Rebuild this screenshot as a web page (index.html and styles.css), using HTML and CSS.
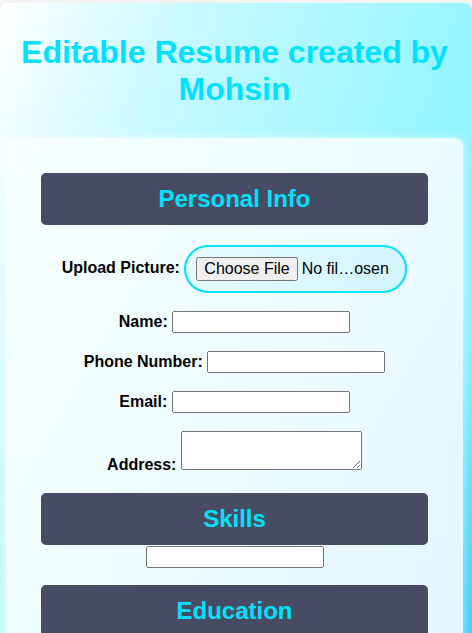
FILE: index.html
```html
<!DOCTYPE html>
<html lang="en">
<head>
<meta charset="utf-8">
<title>Editable Resume</title>
<link rel="stylesheet" href="styles.css">
</head>
<body>
<div class="page">
  <h1 class="title">Editable Resume created by Mohsin</h1>
  <form class="card">
    <h2 class="section-head">Personal Info</h2>
    <div class="row row-upload">
      <label class="label" for="pic">Upload Picture:</label>
      <span class="pill"><input class="file" type="file" id="pic"></span>
    </div>
    <div class="row">
      <label class="label" for="name">Name:</label>
      <input class="field" type="text" id="name">
    </div>
    <div class="row">
      <label class="label" for="phone">Phone Number:</label>
      <input class="field" type="text" id="phone">
    </div>
    <div class="row">
      <label class="label" for="email">Email:</label>
      <input class="field" type="text" id="email">
    </div>
    <div class="row row-address">
      <label class="label" for="address">Address:</label>
      <textarea class="area" id="address"></textarea>
    </div>
    <h2 class="section-head section-gap">Skills</h2>
    <div class="row row-tight">
      <input class="field" type="text">
    </div>
    <h2 class="section-head section-gap2">Education</h2>
    <div class="row">
      <input class="field" type="text">
    </div>
  </form>
</div>
</body>
</html>
```

FILE: styles.css
```css
html {
  background: #f3f3f3;
}
body {
  margin: 3px 0 0;
  min-height: 900px;
  border-radius: 8px 8px 0 0;
  font-family: "Liberation Sans", Arial, sans-serif;
  background:
    radial-gradient(ellipse 200px 380px at 100% 80%, rgba(40, 196, 246, 0.95), rgba(40, 196, 246, 0) 100%),
    linear-gradient(110deg, #ffffff 0%, #c6f9ff 25%, #96f5ff 60%, #70eeff 100%);
}
.page {
  padding: 31px 9px 0 6px;
}
.title {
  margin: 0 0 30px;
  font-size: 32px;
  font-weight: bold;
  line-height: normal;
  text-align: center;
  color: #00e1ff;
}
.card {
  width: 457px;
  box-sizing: border-box;
  padding: 35px 35px 40px;
  border-radius: 8px;
  background: linear-gradient(120deg, #f7ffff 0%, #effeff 40%, #e2f6ff 100%);
  box-shadow: 0 0 10px rgba(255, 255, 255, 0.6);
  display: flex;
  flex-direction: column;
  align-items: center;
}
.section-head {
  align-self: stretch;
  margin: 0;
  padding: 13px 0;
  line-height: 26px;
  font-size: 24px;
  font-weight: bold;
  text-align: center;
  color: #00e1ff;
  background: #474b63;
  border-radius: 5px;
}
.row {
  display: block;
  text-align: center;
  margin-top: 18px;
  font-size: 16px;
}
.row-upload {
  margin-top: 20px;
}
.row-address {
  margin-top: 18px;
}
.row-tight {
  margin-top: 1px;
}
.label {
  font-weight: bold;
  color: #000;
}
.pill {
  display: inline-block;
  vertical-align: middle;
  padding: 10px;
  border: 2px solid #00e1ff;
  border-radius: 25px;
  background: linear-gradient(120deg, #e6fbff, #d2f5ff);
}
.file {
  font-family: Arial, "Liberation Sans", sans-serif;
  font-size: 16px;
  width: 199px;
  display: block;
}
.field {
  font-family: Arial, "Liberation Sans", sans-serif;
  box-sizing: border-box;
  width: 178px;
  height: 22px;
  margin: 0;
}
.area {
  vertical-align: baseline;
  box-sizing: border-box;
  width: 181px;
  height: 39px;
  margin: 0;
}
.section-gap {
  margin-top: 19px;
}
.section-gap2 {
  margin-top: 17px;
}
```
